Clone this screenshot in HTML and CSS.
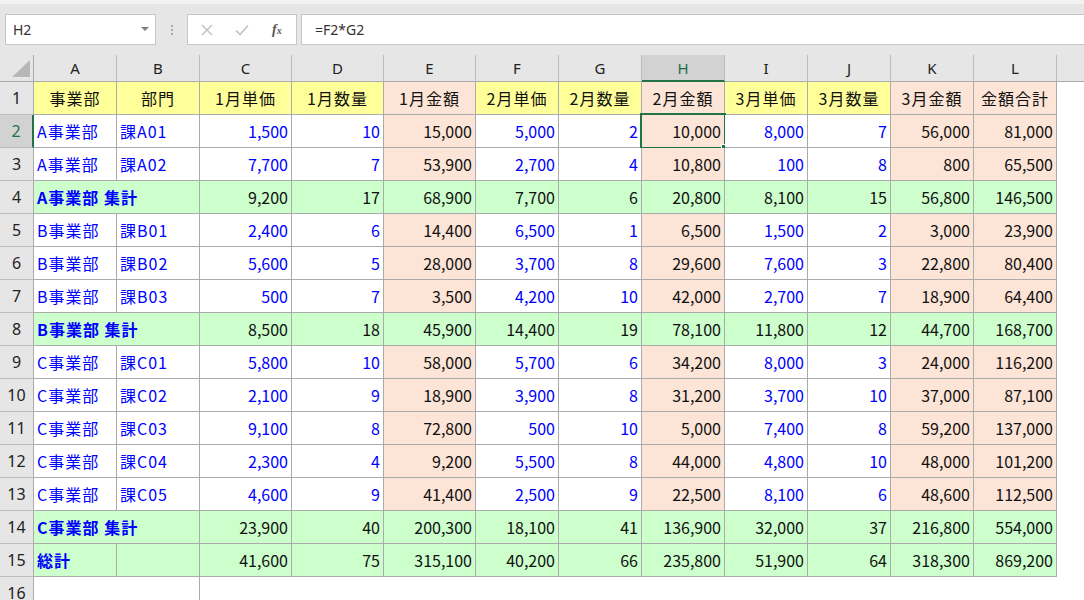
FILE: index.html
```html
<!DOCTYPE html>
<html lang="ja">
<head>
<meta charset="utf-8">
<title>Excel</title>
<link rel="stylesheet" href="styles.css">
</head>
<body>
<div class="app">
  <div class="topstrip"></div>
  <div class="fbar">
    <div class="namebox">
      <span class="nb-text">H2</span>
      <svg class="nb-arrow" width="8" height="5" viewBox="0 0 8 5"><path d="M0 0 L8 0 L4 4 Z" fill="#808080"/></svg>
    </div>
    <div class="grip"><i></i><i></i><i></i></div>
    <div class="fbtns">
      <svg class="btn-icon" width="12" height="12" viewBox="0 0 12 12"><path d="M1 1 L11 11 M11 1 L1 11" stroke="#c0c0c0" stroke-width="1.4" fill="none"/></svg>
      <svg class="btn-icon" width="14" height="12" viewBox="0 0 14 12"><path d="M1 6.5 L5 10.5 L13 1.5" stroke="#c0c0c0" stroke-width="1.6" fill="none"/></svg>
      <span class="fx">f<sub>x</sub></span>
    </div>
    <div class="finput">=F2*G2</div>
  </div>

  <div class="sheet">
    <!-- column headers -->
    <div class="ch corner"><svg width="33" height="26" viewBox="0 0 33 26"><path d="M30 5 L30 22 L12 22 Z" fill="#b7b7b7"/></svg></div>
    <div class="ch">A</div><div class="ch">B</div><div class="ch">C</div><div class="ch">D</div>
    <div class="ch">E</div><div class="ch">F</div><div class="ch">G</div><div class="ch ch-sel">H</div>
    <div class="ch">I</div><div class="ch">J</div><div class="ch">K</div><div class="ch">L</div>
    <div class="ch ch-fill"></div>

    <!-- row 1 -->
    <div class="rh">1</div>
    <div class="c y ctr">事業部</div><div class="c y ctr">部門</div><div class="c y ctr">1月単価</div><div class="c y ctr">1月数量</div>
    <div class="c p ctr">1月金額</div><div class="c y ctr">2月単価</div><div class="c y ctr">2月数量</div><div class="c p ctr">2月金額</div>
    <div class="c y ctr">3月単価</div><div class="c y ctr">3月数量</div><div class="c p ctr">3月金額</div><div class="c p ctr">金額合計</div>
    <div class="fill"></div>

    <!-- row 2 -->
    <div class="rh rh-sel">2</div>
    <div class="c b t">A事業部</div><div class="c b t">課A01</div><div class="c b n">1,500</div><div class="c b n">10</div>
    <div class="c p n">15,000</div><div class="c b n">5,000</div><div class="c b n">2</div><div class="c p n sel">10,000<span class="selbox"><span class="handle"></span></span></div>
    <div class="c b n">8,000</div><div class="c b n">7</div><div class="c p n">56,000</div><div class="c p n">81,000</div>
    <div class="fill"></div>

    <!-- row 3 -->
    <div class="rh">3</div>
    <div class="c b t">A事業部</div><div class="c b t">課A02</div><div class="c b n">7,700</div><div class="c b n">7</div>
    <div class="c p n">53,900</div><div class="c b n">2,700</div><div class="c b n">4</div><div class="c p n">10,800</div>
    <div class="c b n">100</div><div class="c b n">8</div><div class="c p n">800</div><div class="c p n">65,500</div>
    <div class="fill"></div>

    <!-- row 4 -->
    <div class="rh">4</div>
    <div class="c g lbl span2">A事業部 集計</div><div class="c g n">9,200</div><div class="c g n">17</div>
    <div class="c g n">68,900</div><div class="c g n">7,700</div><div class="c g n">6</div><div class="c g n">20,800</div>
    <div class="c g n">8,100</div><div class="c g n">15</div><div class="c g n">56,800</div><div class="c g n">146,500</div>
    <div class="fill"></div>

    <!-- row 5 -->
    <div class="rh">5</div>
    <div class="c b t">B事業部</div><div class="c b t">課B01</div><div class="c b n">2,400</div><div class="c b n">6</div>
    <div class="c p n">14,400</div><div class="c b n">6,500</div><div class="c b n">1</div><div class="c p n">6,500</div>
    <div class="c b n">1,500</div><div class="c b n">2</div><div class="c p n">3,000</div><div class="c p n">23,900</div>
    <div class="fill"></div>

    <!-- row 6 -->
    <div class="rh">6</div>
    <div class="c b t">B事業部</div><div class="c b t">課B02</div><div class="c b n">5,600</div><div class="c b n">5</div>
    <div class="c p n">28,000</div><div class="c b n">3,700</div><div class="c b n">8</div><div class="c p n">29,600</div>
    <div class="c b n">7,600</div><div class="c b n">3</div><div class="c p n">22,800</div><div class="c p n">80,400</div>
    <div class="fill"></div>

    <!-- row 7 -->
    <div class="rh">7</div>
    <div class="c b t">B事業部</div><div class="c b t">課B03</div><div class="c b n">500</div><div class="c b n">7</div>
    <div class="c p n">3,500</div><div class="c b n">4,200</div><div class="c b n">10</div><div class="c p n">42,000</div>
    <div class="c b n">2,700</div><div class="c b n">7</div><div class="c p n">18,900</div><div class="c p n">64,400</div>
    <div class="fill"></div>

    <!-- row 8 -->
    <div class="rh">8</div>
    <div class="c g lbl span2">B事業部 集計</div><div class="c g n">8,500</div><div class="c g n">18</div>
    <div class="c g n">45,900</div><div class="c g n">14,400</div><div class="c g n">19</div><div class="c g n">78,100</div>
    <div class="c g n">11,800</div><div class="c g n">12</div><div class="c g n">44,700</div><div class="c g n">168,700</div>
    <div class="fill"></div>

    <!-- row 9 -->
    <div class="rh">9</div>
    <div class="c b t">C事業部</div><div class="c b t">課C01</div><div class="c b n">5,800</div><div class="c b n">10</div>
    <div class="c p n">58,000</div><div class="c b n">5,700</div><div class="c b n">6</div><div class="c p n">34,200</div>
    <div class="c b n">8,000</div><div class="c b n">3</div><div class="c p n">24,000</div><div class="c p n">116,200</div>
    <div class="fill"></div>

    <!-- row 10 -->
    <div class="rh">10</div>
    <div class="c b t">C事業部</div><div class="c b t">課C02</div><div class="c b n">2,100</div><div class="c b n">9</div>
    <div class="c p n">18,900</div><div class="c b n">3,900</div><div class="c b n">8</div><div class="c p n">31,200</div>
    <div class="c b n">3,700</div><div class="c b n">10</div><div class="c p n">37,000</div><div class="c p n">87,100</div>
    <div class="fill"></div>

    <!-- row 11 -->
    <div class="rh">11</div>
    <div class="c b t">C事業部</div><div class="c b t">課C03</div><div class="c b n">9,100</div><div class="c b n">8</div>
    <div class="c p n">72,800</div><div class="c b n">500</div><div class="c b n">10</div><div class="c p n">5,000</div>
    <div class="c b n">7,400</div><div class="c b n">8</div><div class="c p n">59,200</div><div class="c p n">137,000</div>
    <div class="fill"></div>

    <!-- row 12 -->
    <div class="rh">12</div>
    <div class="c b t">C事業部</div><div class="c b t">課C04</div><div class="c b n">2,300</div><div class="c b n">4</div>
    <div class="c p n">9,200</div><div class="c b n">5,500</div><div class="c b n">8</div><div class="c p n">44,000</div>
    <div class="c b n">4,800</div><div class="c b n">10</div><div class="c p n">48,000</div><div class="c p n">101,200</div>
    <div class="fill"></div>

    <!-- row 13 -->
    <div class="rh">13</div>
    <div class="c b t">C事業部</div><div class="c b t">課C05</div><div class="c b n">4,600</div><div class="c b n">9</div>
    <div class="c p n">41,400</div><div class="c b n">2,500</div><div class="c b n">9</div><div class="c p n">22,500</div>
    <div class="c b n">8,100</div><div class="c b n">6</div><div class="c p n">48,600</div><div class="c p n">112,500</div>
    <div class="fill"></div>

    <!-- row 14 -->
    <div class="rh">14</div>
    <div class="c g lbl span2">C事業部 集計</div><div class="c g n">23,900</div><div class="c g n">40</div>
    <div class="c g n">200,300</div><div class="c g n">18,100</div><div class="c g n">41</div><div class="c g n">136,900</div>
    <div class="c g n">32,000</div><div class="c g n">37</div><div class="c g n">216,800</div><div class="c g n">554,000</div>
    <div class="fill"></div>

    <!-- row 15 -->
    <div class="rh">15</div>
    <div class="c g lbl">総計</div><div class="c g"></div><div class="c g n">41,600</div><div class="c g n">75</div>
    <div class="c g n">315,100</div><div class="c g n">40,200</div><div class="c g n">66</div><div class="c g n">235,800</div>
    <div class="c g n">51,900</div><div class="c g n">64</div><div class="c g n">318,300</div><div class="c g n">869,200</div>
    <div class="fill"></div>

    <!-- row 16 -->
    <div class="rh">16</div>
    <div class="blank span2 edge"></div>
    <div class="blank rest"></div>
  </div>
</div>
</body>
</html>
```

FILE: styles.css
```css
html, body {
  margin: 0;
  padding: 0;
  background: #ffffff;
  overflow: hidden;
}

.app {
  width: 1084px;
  height: 600px;
  overflow: hidden;
  font-family: "Noto Sans CJK JP", "Noto Sans", sans-serif;
}

.topstrip {
  height: 4px;
  background: #f3f2f1;
}

.fbar {
  height: 51px;
  box-sizing: border-box;
  background: #e6e6e6;
  padding: 10px 0 0 5px;
  display: flex;
  align-items: flex-start;
}

.namebox {
  width: 151px;
  height: 31px;
  box-sizing: border-box;
  background: #fff;
  border: 1px solid #c6c6c6;
  display: flex;
  align-items: center;
  justify-content: space-between;
  padding: 0 6px 0 7px;
}

.nb-text {
  font-family: "Noto Sans", sans-serif;
  font-size: 14px;
  color: #333;
}

.nb-arrow {
  display: block;
}

.grip {
  width: 31px;
  height: 31px;
  display: flex;
  flex-direction: column;
  align-items: center;
  justify-content: center;
  gap: 2px;
}

.grip i {
  display: block;
  width: 2px;
  height: 2px;
  background: #a8a8a8;
}

.fbtns {
  width: 110px;
  height: 31px;
  box-sizing: border-box;
  background: #fff;
  border: 1px solid #c6c6c6;
  display: flex;
  align-items: center;
  padding: 0 0 0 13px;
  gap: 22px;
}

.btn-icon {
  display: block;
}

.fx {
  font-family: "Liberation Serif", serif;
  font-style: italic;
  font-weight: bold;
  font-size: 14px;
  color: #555;
  margin-left: 1px;
}

.fx sub {
  font-size: 10px;
  vertical-align: 0;
}

.finput {
  flex: 1;
  height: 31px;
  margin-left: 4px;
  box-sizing: border-box;
  background: #fff;
  border: 1px solid #c6c6c6;
  border-right: none;
  padding: 0 0 0 13px;
  display: flex;
  align-items: center;
  font-family: "Noto Sans", sans-serif;
  font-size: 14px;
  color: #333;
}

.sheet {
  display: grid;
  grid-template-columns: 34px 83px 83px 92px 92px 92px repeat(7, 83px) 1fr;
  grid-template-rows: 27px;
  grid-auto-rows: 33px;
}

.ch {
  background: #e6e6e6;
  border-right: 1px solid #bcbcbc;
  border-bottom: 1px solid #ababab;
  box-sizing: border-box;
  display: flex;
  align-items: center;
  justify-content: center;
  font-family: "Noto Sans", sans-serif;
  font-size: 15px;
  color: #222;
}

.corner {
  border-right-color: #ababab;
  align-items: flex-end;
  justify-content: flex-start;
}

.corner svg {
  display: block;
}

.ch-sel {
  background: #d2d2d2;
  color: #1e6b3f;
  border-bottom: 2px solid #217346;
}

.ch-fill {
  border-right: none;
}

.rh {
  background: #e6e6e6;
  border-right: 1px solid #ababab;
  border-bottom: 1px solid #bcbcbc;
  box-sizing: border-box;
  display: flex;
  align-items: center;
  justify-content: center;
  font-family: "Noto Sans", sans-serif;
  font-size: 16px;
  color: #222;
}

.rh-sel {
  background: #d2d2d2;
  color: #217346;
  border-right: 2px solid #217346;
}

.c {
  position: relative;
  box-sizing: border-box;
  border-right: 1px solid #ababab;
  border-bottom: 1px solid #ababab;
  display: flex;
  align-items: center;
  padding: 0 3px 0 3px;
  font-size: 16px;
  color: #111;
  white-space: nowrap;
}

.ctr {
  justify-content: center;
  letter-spacing: 1px;
}

.t {
  letter-spacing: 1px;
}

.n {
  justify-content: flex-end;
}

.y {
  background: #ffff99;
}

.p {
  background: #fce4d6;
}

.g {
  background: #ccffcc;
}

.b {
  background: #ffffff;
  color: #0000ff;
}

.lbl {
  color: #0000ff;
  font-weight: bold;
  letter-spacing: 1px;
}

.span2 {
  grid-column: span 2;
}

.fill {
  background: #fff;
}

.blank {
  background: #fff;
}

.edge {
  border-right: 1px solid #ababab;
}

.rest {
  grid-column: span 12;
}

.selbox {
  position: absolute;
  left: -2px;
  top: -2px;
  right: -2px;
  bottom: -2px;
  border: 2px solid #217346;
  pointer-events: none;
}

.handle {
  position: absolute;
  right: -4px;
  bottom: -4px;
  width: 5px;
  height: 5px;
  background: #217346;
  border: 1px solid #fff;
}
```
